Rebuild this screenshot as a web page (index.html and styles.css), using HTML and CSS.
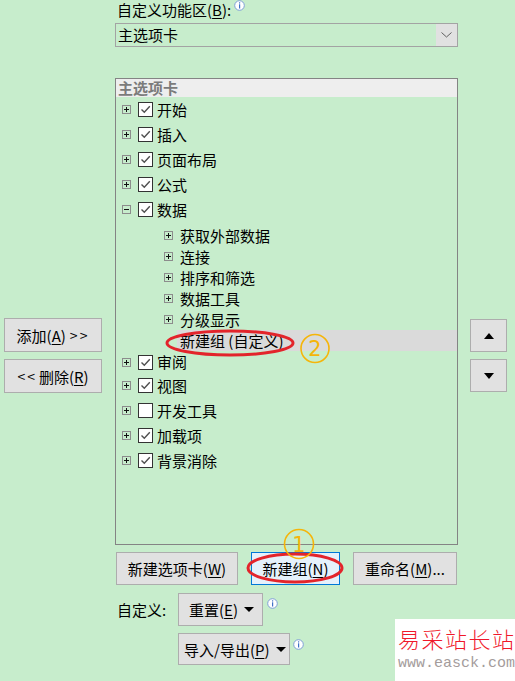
FILE: index.html
```html
<!DOCTYPE html>
<html lang="zh-CN">
<head>
<meta charset="utf-8">
<title>自定义功能区</title>
<link rel="stylesheet" href="styles.css">
</head>
<body>
<div class="page">
  <div class="top">
    <div class="title">自定义功能区(<u>B</u>):<svg class="info info-top" width="11" height="11" viewBox="0 0 11 11"><circle cx="5.5" cy="5.5" r="4.8" fill="#fff" stroke="#7f9fd6" stroke-width="1"/><rect x="5" y="2.3" width="1.2" height="1.2" fill="#3f6fc6"/><rect x="5" y="4.3" width="1.2" height="4.2" fill="#3f6fc6"/></svg></div>
    <div class="select">
      <span class="select-text">主选项卡</span>
      <span class="select-btn"><svg width="11" height="6" viewBox="0 0 11 6"><polyline points="0.5,0.5 5.5,5 10.5,0.5" fill="none" stroke="#606060" stroke-width="1"/></svg></span>
    </div>
  </div>

  <div class="middle">
    <div class="side-left">
      <button class="btn side-btn">添加(<u>A</u>) <span class="arrows">&gt;&gt;</span></button>
      <button class="btn side-btn"><span class="arrows">&lt;&lt;</span> 删除(<u>R</u>)</button>
    </div>

    <div class="tree">
      <div class="tree-head">主选项卡</div>
      <div class="row"><span class="exp plus"></span><span class="cb"><svg class="tick" viewBox="0 0 13 13"><polyline points="2.5,6.5 5.3,9.3 10.8,3.2"/></svg></span><span class="lbl">开始</span></div>
      <div class="row"><span class="exp plus"></span><span class="cb"><svg class="tick" viewBox="0 0 13 13"><polyline points="2.5,6.5 5.3,9.3 10.8,3.2"/></svg></span><span class="lbl">插入</span></div>
      <div class="row"><span class="exp plus"></span><span class="cb"><svg class="tick" viewBox="0 0 13 13"><polyline points="2.5,6.5 5.3,9.3 10.8,3.2"/></svg></span><span class="lbl">页面布局</span></div>
      <div class="row"><span class="exp plus"></span><span class="cb"><svg class="tick" viewBox="0 0 13 13"><polyline points="2.5,6.5 5.3,9.3 10.8,3.2"/></svg></span><span class="lbl">公式</span></div>
      <div class="row"><span class="exp"></span><span class="cb"><svg class="tick" viewBox="0 0 13 13"><polyline points="2.5,6.5 5.3,9.3 10.8,3.2"/></svg></span><span class="lbl">数据</span></div>
      <div class="group">
        <div class="sub"><span class="exp plus"></span><span class="lbl">获取外部数据</span></div>
        <div class="sub"><span class="exp plus"></span><span class="lbl">连接</span></div>
        <div class="sub"><span class="exp plus"></span><span class="lbl">排序和筛选</span></div>
        <div class="sub"><span class="exp plus"></span><span class="lbl">数据工具</span></div>
        <div class="sub"><span class="exp plus"></span><span class="lbl">分级显示</span></div>
        <div class="sub sel"><span class="lbl">新建组 (自定义)</span></div>
      </div>
      <div class="row row-short"><span class="exp plus"></span><span class="cb"><svg class="tick" viewBox="0 0 13 13"><polyline points="2.5,6.5 5.3,9.3 10.8,3.2"/></svg></span><span class="lbl">审阅</span></div>
      <div class="row"><span class="exp plus"></span><span class="cb"><svg class="tick" viewBox="0 0 13 13"><polyline points="2.5,6.5 5.3,9.3 10.8,3.2"/></svg></span><span class="lbl">视图</span></div>
      <div class="row"><span class="exp plus"></span><span class="cb"></span><span class="lbl">开发工具</span></div>
      <div class="row"><span class="exp plus"></span><span class="cb"><svg class="tick" viewBox="0 0 13 13"><polyline points="2.5,6.5 5.3,9.3 10.8,3.2"/></svg></span><span class="lbl">加载项</span></div>
      <div class="row"><span class="exp plus"></span><span class="cb"><svg class="tick" viewBox="0 0 13 13"><polyline points="2.5,6.5 5.3,9.3 10.8,3.2"/></svg></span><span class="lbl">背景消除</span></div>
    </div>

    <div class="side-right">
      <button class="btn move-btn"><span class="tri-up"></span></button>
      <button class="btn move-btn"><span class="tri-down"></span></button>
    </div>
  </div>

  <div class="actions">
    <button class="btn act-btn act-tab">新建选项卡(<u>W</u>)</button>
    <button class="btn act-btn act-group">新建组(<u>N</u>)</button>
    <button class="btn act-btn act-rename">重命名(<u>M</u>)...</button>
  </div>

  <div class="custom">
    <span class="custom-label">自定义:</span>
    <button class="btn menu-btn reset-btn"><span>重置(<u>E</u>)</span><span class="caret"></span></button>
    <svg class="info info-reset" width="11" height="11" viewBox="0 0 11 11"><circle cx="5.5" cy="5.5" r="4.8" fill="#fff" stroke="#7f9fd6" stroke-width="1"/><rect x="5" y="2.3" width="1.2" height="1.2" fill="#3f6fc6"/><rect x="5" y="4.3" width="1.2" height="4.2" fill="#3f6fc6"/></svg>
  </div>
  <div class="custom custom-2">
    <button class="btn menu-btn io-btn"><span>导入/导出(<u>P</u>)</span><span class="caret"></span></button>
    <svg class="info info-io" width="11" height="11" viewBox="0 0 11 11"><circle cx="5.5" cy="5.5" r="4.8" fill="#fff" stroke="#7f9fd6" stroke-width="1"/><rect x="5" y="2.3" width="1.2" height="1.2" fill="#3f6fc6"/><rect x="5" y="4.3" width="1.2" height="4.2" fill="#3f6fc6"/></svg>
  </div>

  <svg class="marks" width="515" height="681" viewBox="0 0 515 681">
    <ellipse cx="230" cy="343" rx="63" ry="12" fill="none" stroke="#e3242b" stroke-width="3"/>
    <circle cx="315" cy="348.5" r="14" fill="none" stroke="#f5b50a" stroke-width="1.6"/>
    <text x="315" y="356" text-anchor="middle" class="mark-num">2</text>
    <ellipse cx="295" cy="568" rx="47" ry="14" fill="none" stroke="#e3242b" stroke-width="3"/>
    <circle cx="299" cy="544" r="14.5" fill="none" stroke="#f5b50a" stroke-width="1.6"/>
    <text x="299" y="552" text-anchor="middle" class="mark-num">1</text>
  </svg>

  <div class="watermark">
    <div class="wm-cn">易采站长站</div>
    <div class="wm-en">www.easck.com</div>
  </div>
</div>
</body>
</html>
```

FILE: styles.css
```css
* { box-sizing: border-box; }
html, body { margin: 0; padding: 0; }
body {
  width: 515px;
  height: 681px;
  overflow: hidden;
  background: #c7edcc;
  font-family: "Noto Sans CJK SC", "Noto Sans", sans-serif;
  font-size: 15px;
  color: #000;
}
.page { position: relative; width: 515px; height: 681px; }
u { text-decoration: underline; text-underline-offset: 2px; text-decoration-thickness: 1px; }

.top { margin-left: 115px; width: 343px; }
.title { height: 20px; line-height: 20px; padding-left: 2px; display: flex; align-items: flex-start; }
.info-top { margin-left: 3px; margin-top: 0; }
.select {
  margin-top: 3px;
  height: 24px;
  border: 1px solid #a3a3a3;
  display: flex;
  align-items: stretch;
}
.select-text { flex: 1; line-height: 22px; padding-left: 2px; }
.select-btn {
  width: 21px;
  background: #e1e1e1;
  display: flex;
  align-items: center;
  justify-content: center;
}

.middle { display: flex; margin-top: 31px; }
.side-left {
  width: 115px;
  padding-left: 4px;
  padding-top: 240px;
  display: flex;
  flex-direction: column;
  gap: 7px;
}
.btn {
  font-family: inherit;
  font-size: 15px;
  color: #000;
  background: #e1e1e1;
  border: 1px solid #adadad;
  padding: 0;
  margin: 0;
  display: flex;
  align-items: center;
  justify-content: center;
}
.side-btn { width: 98px; height: 34px; }
.arrows { letter-spacing: 2px; margin-left: 4px; font-size: 14px; }
.side-btn .arrows:first-child { margin-left: 0; margin-right: 2px; }

.tree {
  width: 343px;
  height: 467px;
  border: 1px solid #848484;
}
.tree-head {
  height: 18px;
  line-height: 18px;
  background: #eeeeee;
  color: #7b7b7b;
  font-weight: bold;
  padding-left: 2px;
}
.row { height: 25px; display: flex; align-items: center; padding-left: 6px; }
.row-short { height: 22px; }
.group { margin-top: 3px; }
.sub { height: 21px; display: flex; align-items: center; padding-left: 48px; }
.sub.sel { margin-left: 61px; padding-left: 3px; background: #dadada; }
.lbl { line-height: 21px; white-space: nowrap; margin-top: -1px; }

.exp {
  position: relative;
  width: 9px;
  height: 9px;
  border: 1px solid #8c8c8c;
  margin-right: 7px;
  flex: none;
}
.exp::before {
  content: "";
  position: absolute;
  left: 1px; top: 3px;
  width: 5px; height: 1px;
  background: #111;
}
.exp.plus::after {
  content: "";
  position: absolute;
  left: 3px; top: 1px;
  width: 1px; height: 5px;
  background: #111;
}
.cb {
  width: 15px;
  height: 15px;
  border: 1px solid #333;
  background: #fff;
  margin-right: 4px;
  flex: none;
  display: flex;
}
.tick { width: 13px; height: 13px; }
.tick polyline { fill: none; stroke: #505050; stroke-width: 1.4; }

.side-right {
  margin-left: 12px;
  padding-top: 241px;
  display: flex;
  flex-direction: column;
  gap: 7px;
}
.move-btn { width: 37px; height: 33px; }
.tri-up { width: 0; height: 0; border-left: 5px solid transparent; border-right: 5px solid transparent; border-bottom: 6px solid #000; }
.tri-down { width: 0; height: 0; border-left: 5px solid transparent; border-right: 5px solid transparent; border-top: 6px solid #000; }

.actions { display: flex; gap: 13px; margin-left: 116px; margin-top: 7px; }
.act-btn { height: 33px; }
.act-tab { width: 122px; }
.act-group { width: 89px; background: #e5f1fb; border-color: #0078d7; }
.act-rename { width: 104px; }

.custom { display: flex; align-items: flex-start; margin-left: 117px; margin-top: 8px; }
.custom-label { width: 61px; line-height: 33px; }
.menu-btn { height: 33px; justify-content: flex-start; }
.reset-btn { width: 85px; padding-left: 10px; }
.reset-btn .caret { margin-left: 6px; }
.custom-2 { margin-left: 178px; margin-top: 7px; }
.io-btn { width: 112px; height: 32px; padding-left: 5px; }
.io-btn .caret { margin-left: 6px; }
.caret { width: 0; height: 0; border-left: 5px solid transparent; border-right: 5px solid transparent; border-top: 5px solid #000; }
.info-reset { margin-left: 4px; margin-top: 5px; }
.info-io { margin-left: 3px; margin-top: 6px; }

.marks { position: absolute; left: 0; top: 0; pointer-events: none; }
.mark-num { font-family: "DejaVu Sans", sans-serif; font-size: 21px; fill: #f5b50a; }

.watermark {
  position: absolute;
  left: 395px;
  top: 619px;
  width: 120px;
  height: 62px;
  background: #fff;
  padding-left: 3px;
}
.wm-cn {
  margin-top: 6px;
  color: #f0182a;
  font-size: 22px;
  line-height: 26px;
  letter-spacing: 1.5px;
  font-weight: 300;
  white-space: nowrap;
}
.wm-en {
  margin-top: 5px;
  color: #a49c9c;
  font-family: "Liberation Mono", monospace;
  font-size: 15px;
  line-height: 16px;
  white-space: nowrap;
}
```
